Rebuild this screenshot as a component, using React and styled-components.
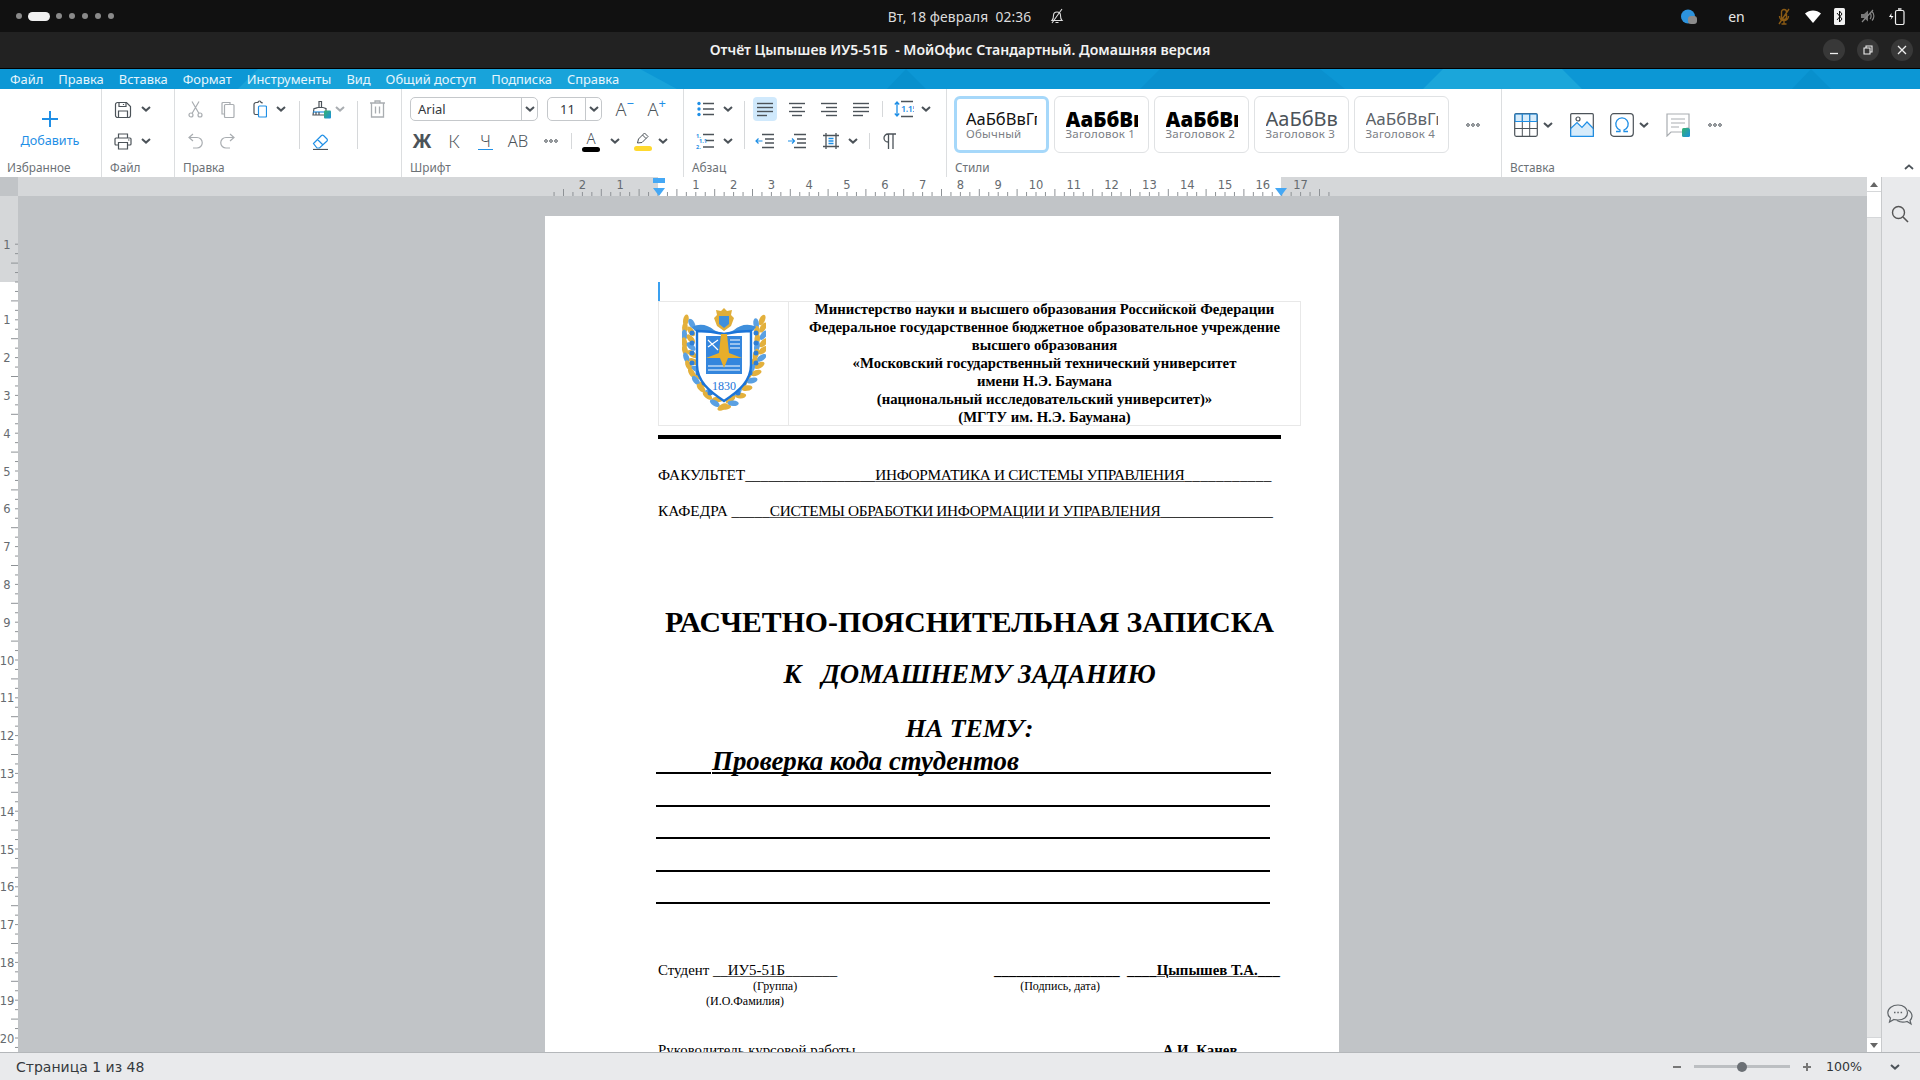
import React from 'react';
import styled, { createGlobalStyle } from 'styled-components';

const D = '#4c5359', G = '#a9adb1', B = '#1f8fe6';
const UI = '"Noto Sans", "Open Sans", sans-serif';
const SERIF = '"Liberation Serif", "Times New Roman", serif';

const Global = createGlobalStyle`
  html, body { margin: 0; padding: 0; background: #111; }
  * { box-sizing: border-box; }
`;
const App1 = styled.div`width:1920px;height:1080px;overflow:hidden;display:flex;flex-direction:column;font-family:${UI};`;

/* system bar */
const SysBar = styled.div`height:32px;flex:none;background:#111;display:grid;grid-template-columns:1fr auto 1fr;align-items:center;color:#dcdcdc;`;
const Workspaces = styled.div`display:flex;align-items:center;gap:7px;padding-left:16px;`;
const WsDot = styled.span`width:6px;height:6px;border-radius:50%;background:#8a8a8a;`;
const WsPill = styled.span`width:22px;height:9px;border-radius:5px;background:#f0f0f0;margin:0 -1px;`;
const Clock = styled.div`display:flex;align-items:center;gap:19px;font-size:13.8px;letter-spacing:.1px;white-space:pre;padding-left:32px;`;
const Tray = styled.div`display:flex;align-items:center;justify-content:flex-end;padding-right:11px;`;
const TrayItem = styled.span`display:flex;justify-content:center;align-items:center;width:${p=>p.$w}px;font-size:14px;color:#e6e6e6;`;

/* title bar */
const TitleBar = styled.div`height:37px;flex:none;background:#222;border-bottom:1px solid #000;display:flex;align-items:center;justify-content:center;position:relative;`;
const TitleText = styled.div`color:#f2f2f2;font-size:14.08px;font-weight:600;line-height:20px;margin-bottom:1px;white-space:pre;`;
const WinBtns = styled.div`position:absolute;right:7px;top:7px;display:flex;gap:12px;`;
const WinBtn = styled.div`width:22px;height:22px;border-radius:50%;background:#383838;display:flex;align-items:center;justify-content:center;`;

/* menu */
const MenuBar = styled.div`height:20px;flex:none;position:relative;background:#0c97d5;display:flex;align-items:center;gap:15px;padding:1px 0 0 10px;overflow:hidden;`;
const MenuBg = styled.svg`position:absolute;left:0;top:0;`;
const MenuItem = styled.span`position:relative;color:#e6f5fc;font-size:12.9px;line-height:19px;white-space:nowrap;`;

/* ribbon */
const Ribbon = styled.div`height:88px;flex:none;background:#fff;display:flex;`;
const Group = styled.div`width:${p=>p.$w}px;flex:${p=>p.$grow?'1':'none'};border-right:${p=>p.$grow?'0':'1px solid #dcdee0'};padding:8px 0 0 ${p=>p.$pl}px;display:flex;flex-direction:column;`;
const GroupBody = styled.div`height:56px;display:flex;align-items:${p=>p.$center?'center':'flex-start'};`;
const GroupLabel = styled.div`height:16px;margin-top:6px;margin-left:${p=>p.$ml||0}px;font-size:11.8px;line-height:16px;color:#6c7176;display:flex;justify-content:space-between;align-items:center;padding-right:6px;`;
const Stack = styled.div`display:flex;flex-direction:column;gap:8px;`;
const Row = styled.div`height:24px;display:flex;align-items:center;`;
const Slot = styled.span`flex:none;width:${p=>p.$w}px;margin-left:${p=>p.$ml||0}px;height:24px;display:flex;align-items:center;justify-content:center;border-radius:4px;background:${p=>p.$on?'#d0e9fc':'transparent'};align-self:center;`;
const ToolSep = styled.span`flex:none;width:1px;height:48px;margin:4px ${p=>p.$r}px 0 ${p=>p.$l}px;background:#d6d8da;`;
const RowSep = styled.span`flex:none;width:1px;height:16px;margin:0 ${p=>p.$r||0}px 0 ${p=>p.$l}px;background:#d6d8da;`;
const AddBtn = styled.div`width:84px;margin-left:8px;display:flex;flex-direction:column;align-items:center;color:${B};font-size:12.6px;line-height:16px;gap:5px;padding-top:13px;`;
const Select = styled.div`flex:none;width:${p=>p.$w}px;margin-left:${p=>p.$ml||0}px;height:24px;border:1px solid #c5c8cb;border-radius:5px;display:flex;align-items:center;font-size:13px;color:#33383c;`;
const SelectText = styled.span`flex:1;padding-left:${p=>p.$pl}px;`;
const SelectArrow = styled.span`flex:none;width:16px;height:22px;border-left:1px solid #c5c8cb;display:flex;align-items:center;justify-content:center;`;
const BigGlyph = styled.span`font-size:${p=>p.$s||17}px;font-weight:${p=>p.$wt||300};color:${D};line-height:18px;position:relative;font-family:${p=>p.$f||UI};`;
const Under = styled.span`font-size:16px;font-weight:300;color:${D};line-height:16px;border-bottom:1.5px solid ${B};padding:0 2px;`;
const Sup = styled.span`position:absolute;left:100%;top:-3px;color:${B};font-size:13px;font-weight:400;line-height:13px;`;
const ColorGlyph = styled.span`display:flex;flex-direction:column;align-items:center;font-size:15px;font-weight:300;line-height:15px;color:${D};`;
const ColorBar = styled.span`width:18px;height:5px;border-radius:3px;background:${p=>p.$c};margin-top:1px;`;
const StyleCard = styled.div`flex:none;width:95px;height:57px;margin:-1px 5px 0 0;border-radius:6px;border:${p=>p.$on?'3px solid #a6d8fa':'1.5px solid #e0e2e4'};padding:${p=>p.$on?'10px 9px 0 9px':'11.5px 10.5px 0 10.5px'};overflow:hidden;`;
const StylePreview = styled.div`height:18px;overflow:hidden;white-space:nowrap;font-size:${p=>p.$s}px;font-weight:${p=>p.$wt};line-height:20px;color:${p=>p.$c};`;
const StyleName = styled.div`font-size:11.5px;line-height:13px;color:#7b8085;white-space:nowrap;letter-spacing:.2px;`;

/* main */
const Main = styled.div`flex:1;min-height:0;display:flex;`;
const Workspace = styled.div`flex:1;min-width:0;display:flex;flex-direction:column;`;
const RulerBar = styled.div`height:19px;flex:none;display:flex;background:#d5d7d9;`;
const RulerCorner = styled.div`width:18px;flex:none;background:#c1c4c7;`;
const DocRow = styled.div`flex:1;min-height:0;display:flex;background:#c1c4c7;overflow:hidden;`;
const VRuler = styled.svg`flex:none;display:block;`;
const Canvas = styled.div`flex:1;min-width:0;display:flex;justify-content:center;padding:20px 1px 0 0;overflow:hidden;`;
const Page = styled.div`flex:none;width:794px;height:1200px;background:#fff;padding:66px 0 0 113px;font-family:${SERIF};color:#000;`;
const Caret = styled.div`width:2px;height:19px;background:#3aa0f0;margin-bottom:1px;`;
const HeadTable = styled.div`width:643px;height:125px;border:1px solid #e8e8e8;margin-top:-1px;display:grid;grid-template-columns:130px 1fr;`;
const LogoCell = styled.div`border-right:1px solid #e8e8e8;display:flex;justify-content:center;padding:5px 0 0 0;`;
const HeadText = styled.div`margin-top:-2px;text-align:center;font-size:14.72px;font-weight:700;line-height:18px;white-space:nowrap;`;
const ThickRule = styled.div`width:623px;height:4px;background:#000;margin-top:9px;`;
const DocLine = styled.div`height:20px;margin-top:${p=>p.$mt}px;font-size:15.3px;line-height:20px;white-space:pre;`;
const Title = styled.div`width:623px;text-align:center;white-space:pre;font-weight:700;font-style:${p=>p.$it?'italic':'normal'};font-size:${p=>p.$s}px;line-height:${p=>p.$lh}px;margin-top:${p=>p.$mt}px;`;
const TopicRow = styled.div`display:flex;align-items:flex-end;margin-left:-2px;height:30px;`;
const Fill = styled.span`flex:none;width:${p=>p.$w}px;height:2px;background:#000;margin-bottom:3px;`;
const Topic = styled.span`font-size:26.85px;font-weight:700;font-style:italic;line-height:37px;border-bottom:2px solid #000;height:31px;margin-bottom:3px;white-space:nowrap;margin-left:1px;`;
const BlankRule = styled.div`width:614px;height:2px;background:#000;margin:${p=>p.$mt}px 0 0 -2px;`;
const SigRow = styled.div`display:flex;margin-top:56px;height:20px;font-size:14.9px;line-height:20px;white-space:pre;`;
const SigLeft = styled.div`width:336px;flex:none;`;
const SubRow = styled.div`display:flex;height:15px;font-size:12px;line-height:15px;white-space:pre;margin-top:${p=>p.$mt||0}px;padding-left:${p=>p.$pl}px;`;
const SubGap = styled.span`flex:none;width:${p=>p.$w}px;`;
const LeaderRow = styled.div`display:flex;margin-top:31px;height:20px;font-size:14.9px;line-height:20px;white-space:pre;`;
const LeaderName = styled.span`margin-left:${p=>p.$ml}px;font-weight:700;`;
const U = styled.span`text-decoration:underline;text-decoration-color:${p=>p.$c||'#555'};letter-spacing:${p=>p.$ls||0}px;`;
const Tail = styled.span`letter-spacing:${p=>p.$ls}px;`;
const Bold = styled.b`font-weight:700;letter-spacing:-.05px;`;

const Scrollbar = styled.div`width:14px;flex:none;background:#e4e5e6;display:flex;flex-direction:column;`;
const ScrollBtn = styled.div`height:15px;flex:none;background:#fff;display:flex;align-items:center;justify-content:center;border-${p=>p.$up?'bottom':'top'}:1px solid #d5d7d9;`;
const ScrollArrow = styled.span`width:0;height:0;border-left:4px solid transparent;border-right:4px solid transparent;${p=>p.$up?'border-bottom':'border-top'}:5px solid #666;`;
const ScrollThumb = styled.div`height:26px;flex:none;background:#fff;border-bottom:1px solid #d5d7d9;`;
const ScrollSpace = styled.div`flex:1;`;
const Side = styled.div`width:39px;flex:none;background:#e9eaec;border-left:1px solid #c8cacc;display:flex;flex-direction:column;justify-content:space-between;align-items:center;padding:28px 2px 24px 0;`;

const Status = styled.div`height:28px;flex:none;background:#e9eaec;border-top:1px solid #b4b7ba;display:flex;align-items:center;justify-content:space-between;padding:0 20px 0 16px;font-size:14px;color:#35393d;font-family:"DejaVu Sans",sans-serif;`;
const StatusRight = styled.div`display:flex;align-items:center;`;
const SliderTrack = styled.div`width:96px;height:3px;background:#bcbfc2;margin:0 12px 0 12px;display:flex;align-items:center;padding-left:43px;`;
const SliderKnob = styled.span`width:10px;height:10px;border-radius:50%;background:#6b7075;`;
const Zoom = styled.span`font-size:12.6px;width:64px;margin-left:14px;color:#2f3336;`;

/* icons */
const Svg = ({w=16,h=16,vb,children,...r})=>(<svg width={w} height={h} viewBox={vb||`0 0 ${w} ${h}`} fill="none" strokeWidth="1.2" stroke={D} style={{flex:'none',display:'block'}} {...r}>{children}</svg>);
const Chev = ({c=D})=><Svg w={10} h={6}><path d="M1 1l4 3.600L9 1" stroke={c} strokeWidth="2"/></Svg>;
const Dots = ()=><Svg w={14} h={4}><circle cx="2" cy="2" r="1.300" strokeWidth="1"/><circle cx="7" cy="2" r="1.300" strokeWidth="1"/><circle cx="12" cy="2" r="1.300" strokeWidth="1"/></Svg>;
const SaveI = ()=><Svg w={18} h={17}><path d="M1.500 3.500a2 2 0 0 1 2-2h9l4 4v9a2 2 0 0 1-2 2h-11a2 2 0 0 1-2-2z"/><path d="M5 1.500v4h7v-4M4.500 16v-6h9v6M9.500 3v1"/></Svg>;
const PrintI = ()=><Svg w={18} h={17}><path d="M4.500 5V1h9v4M4.500 12H2a1 1 0 0 1-1-1V6a1 1 0 0 1 1-1h14a1 1 0 0 1 1 1v5a1 1 0 0 1-1 1h-2.500M4.500 9.500h9V16h-9zM14 7h1.500"/></Svg>;
const CutI = ()=><Svg w={15} h={17}><g stroke={G}><circle cx="3" cy="14" r="2"/><circle cx="12" cy="14" r="2"/><path d="M4 12.500L11 .5M11 12.500L4 .5"/></g></Svg>;
const CopyI = ()=><Svg w={14} h={17}><g stroke={G}><path d="M9 3V1.500H2A1 1 0 0 0 1 2.500V13h2.500"/><rect x="3.500" y="3.500" width="9.500" height="13" rx="1"/></g></Svg>;
const PasteI = ()=><Svg w={14} h={18}><path d="M9 3.500V2.500H8a1.500 1.500 0 0 0-3 0H3a2 2 0 0 0-2 2V13a1.500 1.500 0 0 0 1.500 1.500H5"/><rect x="5.500" y="6" width="8" height="11" rx="1" stroke={B}/></Svg>;
const BrushI = ()=><Svg w={20} h={19}><path d="M8 1.500h2.500v6H8zM3 8.500c2 0 3-1 4-1h5c1 0 2 1 3 1v6.500H2z" /><path d="M2 12h13" stroke={B}/><path d="M5 15v-3M8 15v-3" /><rect x="13" y="10.500" width="7" height="8" rx="1" fill="url(#gBrush)" stroke="none"/><defs><linearGradient id="gBrush" x1="0" y1="0" x2="1" y2="1"><stop offset="0" stopColor="#36b36a"/><stop offset="1" stopColor="#1a8fe0"/></linearGradient></defs></Svg>;
const TrashI = ()=><Svg w={15} h={18}><g stroke={G}><path d="M0 3h15M5 3V1h5v2M1.500 3v14h12V3M5.500 6.500v7M9.500 6.500v7" strokeWidth="1.300"/></g></Svg>;
const UndoI = ()=><Svg w={15} h={16}><path d="M5 1L1 4.500 5 8M1.500 4.500H9a5 5 0 0 1 0 10.500H5" stroke={G}/></Svg>;
const RedoI = ()=><Svg w={15} h={16}><path d="M10 1l4 3.500L10 8M13.500 4.500H6a5 5 0 0 0 0 10.500h4" stroke={G}/></Svg>;
const EraserI = ()=><Svg w={17} h={17}><path d="M1.500 10.500L9.500 2.500a1.500 1.500 0 0 1 2 0l3.500 3.500a1.500 1.500 0 0 1 0 2L7.500 15H5zM5.500 6.500L11 12" stroke={B}/><path d="M1 16.500h15"/></Svg>;
const Lines = ({rows})=><Svg w={17} h={16}>{rows.map(([a,b,y],i)=><path key={i} d={`M${a} ${y}H${b}`} strokeWidth="1.400"/>)}</Svg>;
const BulletI = ()=><Svg w={17} h={16}><g fill={B} stroke="none"><circle cx="2" cy="2.500" r="1.700"/><circle cx="2" cy="8" r="1.700"/><circle cx="2" cy="13.500" r="1.700"/></g><path d="M6 2.500h11M6 8h11M6 13.500h11" strokeWidth="1.300"/></Svg>;
const NumI = ()=><Svg w={19} h={16}><path d="M7 1.500h11M10 7.500h8M7 14h11" strokeWidth="1.300"/><text x="0" y="5" fontSize="5.500" fontWeight="700" fill={B} stroke="none">1.</text><text x="3" y="10" fontSize="5.500" fontWeight="700" fill={B} stroke="none">1.1</text><text x="0" y="15.500" fontSize="5.500" fontWeight="700" fill={B} stroke="none">2.</text></Svg>;
const SpacingI = ()=><Svg w={20} h={18}><path d="M3 2v14M.8 4.500L3 2l2.200 2.500M.8 13.500L3 16l2.200-2.500" stroke={B} strokeWidth="1.300"/><path d="M7 1.500h12M7 16.500h12" strokeWidth="1.300"/><text x="7" y="12" fontSize="9" fontWeight="600" fill={B} stroke="none" letterSpacing="-.4">1.15</text></Svg>;
const OutI = ()=><Svg w={19} h={16}><path d="M7 1.500h12M10 6h9M10 10h9M7 14.500h12" strokeWidth="1.300"/><path d="M7.500 8H1M3.500 5.500L1 8l2.500 2.500" stroke={B}/></Svg>;
const InI = ()=><Svg w={19} h={16}><path d="M7 1.500h12M10 6h9M10 10h9M7 14.500h12" strokeWidth="1.300"/><path d="M1 8h6.500M5 5.500L7.500 8 5 10.500" stroke={B}/></Svg>;
const MarginI = ()=><Svg w={16} h={16}><path d="M0 2.500h16M0 13.500h16M3 0v16M13 0v16" strokeWidth="1.300"/><path d="M5.500 5.500h5M5.500 8h5M5.500 10.500h5" stroke={B} strokeWidth="1.400"/></Svg>;
const ParaI = ()=><Svg w={14} h={16}><path d="M5.500 1v15M10 1v15M13 1H5a4 4 0 0 0 0 8h1" strokeWidth="1.300"/></Svg>;
const TableI = ()=><Svg w={24} h={24}><rect x="1" y="1" width="22" height="8" fill="#d7ecfb" stroke="none"/><path d="M8.300 1v22M15.700 1v22M1 8.500h22M1 15.500h22" strokeWidth="1"/><rect x=".7" y=".7" width="22.600" height="22.600" rx="1.500"/><path d="M1 1h22v7.500H1zM8.300 1v7.500M15.700 1v7.500" stroke={B} strokeWidth="1"/></Svg>;
const ImageI = ()=><Svg w={24} h={24}><rect x=".7" y=".7" width="22.600" height="22.600" rx="1" /><path d="M1 23V16l6-6 5 5 5-5 6 6v7z" fill="#d7ecfb" stroke="none"/><path d="M.7 15.500l6.300-6 5 5 5-5.500 6.300 6.500M.7 15.500V23.300h22.600V16" stroke={B}/><circle cx="8" cy="6" r="2"/></Svg>;
const OmegaI = ()=><Svg w={24} h={24}><rect x=".7" y=".7" width="22.600" height="22.600" rx="3"/><path d="M6 18.500h4v-1.500a6.200 6.200 0 1 1 4 0v1.500h4" stroke={B} strokeWidth="1.300"/></Svg>;
const NoteI = ()=><Svg w={24} h={24}><path d="M1 1h22v14h-2v4H5l-4 4z" stroke={G}/><path d="M5 6h14M5 10h14M5 14h8" stroke={G}/><rect x="16" y="15" width="8" height="9" rx="1.500" fill="url(#gNote)" stroke="none"/><defs><linearGradient id="gNote" x1="0" y1="0" x2="1" y2="1"><stop offset="0" stopColor="#36b36a"/><stop offset="1" stopColor="#1a8fe0"/></linearGradient></defs></Svg>;
const SearchI = ()=><Svg w={18} h={18}><circle cx="7.500" cy="7.500" r="6" stroke="#555" strokeWidth="1.400"/><path d="M12 12l5 5" stroke="#555" strokeWidth="1.600"/></Svg>;
const ChatI = ()=><Svg w={26} h={24}><path d="M11 1c5.500 0 9.500 3.300 9.500 7.700S16.500 16 11 16c-1.500 0-2.500-.2-4-.5L2.500 18l1-4C1.800 12.800.8 10.800.8 8.700.8 4.300 5.500 1 11 1z" stroke="#5f6468"/><path d="M21 6c2.500 1.500 4 3.500 4 6 0 2-1 3.500-2 4.500l1 3.500-4-2.500c-3 1-7 .8-10-1" stroke="#5f6468"/><path d="M7 8.500h1.500M10.300 8.500h1.500M13.600 8.500h1.500" stroke="#5f6468" strokeWidth="1.500"/></Svg>;

const wreath = (side) => Array.from({length:24}).map((_,i)=>{
  const t = i/23;
  const x = 42 + side*(31 + 9*Math.sin(Math.PI*(0.15+t*0.5)) - Math.pow(t,2.5)*37 + (i%2?-3.500:3));
  const y = 13 + t*87;
  return <ellipse key={i} cx={x} cy={y} rx="2.800" ry="5.600" fill={i%3===1?'#5aa0e2':'#e3b03c'} transform={`rotate(${side*(8+t*70)+(i%2?-18:18)} ${x} ${y})`}/>;
});
const Crest = ()=>(
  <svg width="84" height="104" viewBox="0 0 84 104" style={{display:'block',flex:'none'}}>
    {wreath(-1)}{wreath(1)}
    {[-1,1].map(s=>[0,1,2,3,4,5,6].map(i=><circle key={s*10+i} cx={42+s*(32-(i>3?(i-3)*6:0))} cy={26+i*10} r="2.500" fill="#2f7fd6"/>))}
    <path d="M10 20c8-4 16-2 22 3 3 2 7 3 10 3s7-1 10-3c6-5 14-7 22-3l-3 4c-6-1-10 1-14 5H27c-4-4-8-6-14-5z" fill="#3f8fdc"/>
    <path d="M15 24c10 0 18 1 27 3 9-2 17-3 27-3v34c0 16-12 26-27 36C27 84 15 74 15 58z" fill="#fff" stroke="#1b74d8" strokeWidth="2.400"/>
    <rect x="24" y="29" width="36" height="38" fill="#3486dd"/>
    <g stroke="#fff" strokeWidth="1.200"><path d="M26 33l10 10M26 40l10-7M48 33h10M48 37h10M48 41h10M26 59h32M26 63h32"/></g>
    <path d="M39 27h6l2 19 13 5H46l-4 10-4-10H24l13-5z" fill="#e7ae2a"/>
    <text x="42" y="83" fontSize="12" fontFamily="Liberation Serif" textAnchor="middle" fill="#1b74d8">1830</text>
    <path d="M42 1l3 3 5-1-1 5 3 3-3 8-7 5-7-5-3-8 3-3-1-5 5 1z" fill="#e0ae3a"/>
    <path d="M37 9h10v8l-5 4-5-4z" fill="#3f8fdc"/>
  </svg>
);

const cm = 37.8;
const HRuler = () => {
  const o = 640, ticks = [], labels = [];
  for (let i = -11; i <= 71; i++) {
    const x = o + i * cm / 4;
    if (x > 1312) break;
    const long = ((i % 4) + 4) % 4 === 2;
    ticks.push(<path key={i} d={`M${x} ${long?12:15}V19`} stroke="#8e9296" strokeWidth="1"/>);
    if (i % 4 === 0 && i !== 0) labels.push(<text key={i} x={x} y="12" fontSize="11.500" textAnchor="middle" fill="#666b70" fontFamily="DejaVu Sans">{Math.abs(i/4)}</text>);
  }
  return (
    <svg width="1849" height="19" viewBox="0 0 1849 19" style={{display:'block',flex:'none'}}>
      <rect x={o} y="0" width="623" height="19" fill="#fff"/>
      {ticks}{labels}
      <rect x={o-5} y="1" width="12" height="5" fill="#45a8f5"/>
      <path d={`M${o-5} 11h12l-6 8z`} fill="#45a8f5"/>
      <path d={`M${o+617} 11h12l-6 8z`} fill="#45a8f5"/>
    </svg>
  );
};
const VRulerDraw = () => {
  const o = 86, ticks = [], labels = [];
  for (let i = -4; i <= 82; i++) {
    const y = o + i * cm / 4;
    if (y > 856) break;
    const long = ((i % 4) + 4) % 4 === 2;
    ticks.push(<path key={i} d={`M${long?11:15} ${y}H18`} stroke="#8e9296" strokeWidth="1"/>);
    if (i % 4 === 0 && i !== 0) labels.push(<text key={i} x="7" y={y+4.500} fontSize="11.500" textAnchor="middle" fill="#666b70" fontFamily="DejaVu Sans">{Math.abs(i/4)}</text>);
  }
  return (
    <VRuler width="18" height="856" viewBox="0 0 18 856">
      <rect width="18" height="86" fill="#d5d7d9"/>
      <rect y="86" width="18" height="770" fill="#fff"/>
      {ticks}{labels}
    </VRuler>
  );
};

const menu = ['Файл','Правка','Вставка','Формат','Инструменты','Вид','Общий доступ','Подписка','Справка'];
const styles = [
  {p:'АаБбВвГг',n:'Обычный',s:16.5,w:400,c:'#111',on:true},
  {p:'АаБбВв',n:'Заголовок 1',s:20.5,w:900,c:'#000'},
  {p:'АаБбВв',n:'Заголовок 2',s:20.5,w:900,c:'#000'},
  {p:'АаБбВвГг',n:'Заголовок 3',s:20,w:400,c:'#4c5359'},
  {p:'АаБбВвГг',n:'Заголовок 4',s:17,w:400,c:'#5c6268'},
];

export default function App() {
  return (
    <App1>
      <Global/>
      <SysBar>
        <Workspaces><WsDot/><WsPill/><WsDot/><WsDot/><WsDot/><WsDot/><WsDot/></Workspaces>
        <Clock>
          <span>Вт, 18 февраля  02:36</span>
          <Svg w={14} h={16} stroke="#ddd"><path d="M2 12.500c1.500-1.500 1.500-3 1.500-5a3.500 3.500 0 0 1 7 0c0 2 0 3.500 1.500 5zM5.500 14.500h3M12 1L2 15" stroke="#ddd" strokeWidth="1.100"/></Svg>
        </Clock>
        <Tray>
          <TrayItem $w={29}><Svg w={16} h={15}><circle cx="7" cy="7.500" r="7" fill="#2c93dd" stroke="none"/><rect x="7" y="7" width="9" height="8" rx="3" fill="#8b8b8b" stroke="none"/></Svg></TrayItem>
          <TrayItem $w={67}>en</TrayItem>
          <TrayItem $w={27}><Svg w={14} h={17}><path d="M7 1.500a2.500 2.500 0 0 1 2.500 2.500v5a2.500 2.500 0 0 1-5 0V4A2.500 2.500 0 0 1 7 1.500zM2.500 8c0 6 9 6 9 0M7 13v3M4.500 16h5M12 1L2 16" stroke="#8a5a14" strokeWidth="1.400"/></Svg></TrayItem>
          <TrayItem $w={31}><Svg w={16} h={13}><path d="M0 3.500C4.500-.5 11.500-.5 16 3.500L8 13z" fill="#fff" stroke="none"/></Svg></TrayItem>
          <TrayItem $w={23}><Svg w={11} h={17}><rect width="11" height="17" rx="1.500" fill="#f2f2f2" stroke="none"/><path d="M3 5l5 6-2.500 3V3L8 6l-5 6" stroke="#111" strokeWidth="1"/></Svg></TrayItem>
          <TrayItem $w={33}><Svg w={15} h={14}><path d="M1 5h3l4-3.500v11L4 9H1z" fill="#777" stroke="none"/><path d="M10 4c1.500 1.500 1.500 4.500 0 6M12 2.500c2.500 2.500 2.500 6.500 0 9M2 13L13 1" stroke="#888"/></Svg></TrayItem>
          <TrayItem $w={25}><Svg w={17} h={17}><path d="M3.500 5L1 9h2.500L2.500 12 5.500 8H3.300z" fill="#fff" stroke="none"/><rect x="7.500" y="2.500" width="8.500" height="14" rx="1.500" stroke="#f0f0f0"/><path d="M10 1h3.500" stroke="#f0f0f0" strokeWidth="1.500"/></Svg></TrayItem>
        </Tray>
      </SysBar>

      <TitleBar>
        <TitleText>Отчёт Цыпышев ИУ5-51Б  - МойОфис Стандартный. Домашняя версия</TitleText>
        <WinBtns>
          <WinBtn><Svg w={10} h={10}><path d="M1 8.500h8" stroke="#eee" strokeWidth="1.300"/></Svg></WinBtn>
          <WinBtn><Svg w={10} h={10}><path d="M3 3V1h6v6H7M1 3h6v6H1z" stroke="#eee" strokeWidth="1.100"/></Svg></WinBtn>
          <WinBtn><Svg w={10} h={10}><path d="M1 1l8 8M9 1L1 9" stroke="#eee" strokeWidth="1.300"/></Svg></WinBtn>
        </WinBtns>
      </TitleBar>

      <MenuBar>
        <MenuBg width="1920" height="20" viewBox="0 0 1920 20">
          <path d="M238 20L258 0H640L677 20z" fill="#18a3da"/>
          <path d="M887 20L906 0 926 20z" fill="#0890cd"/>
          <path d="M1140 20L1160 0H1320L1345 20z" fill="#0a90ce"/>
          <path d="M1423 20L1443 0H1562L1582 20z" fill="#1ba6da"/>
          <path d="M1792 20L1811 0 1831 20z" fill="#0890cd"/>
        </MenuBg>
        {menu.map(m=><MenuItem key={m}>{m}</MenuItem>)}
      </MenuBar>

      <Ribbon>
        <Group $w={102} $pl={0}>
          <GroupBody>
            <AddBtn>
              <Svg w={18} h={18}><path d="M9 1v16M1 9h16" stroke={B} strokeWidth="2"/></Svg>
              <span>Добавить</span>
            </AddBtn>
          </GroupBody>
          <GroupLabel $ml={7}>Избранное</GroupLabel>
        </Group>

        <Group $w={73} $pl={12}>
          <GroupBody>
            <Stack>
              <Row><Slot $w={18}><SaveI/></Slot><Slot $w={28}><Chev/></Slot></Row>
              <Row><Slot $w={18}><PrintI/></Slot><Slot $w={28}><Chev/></Slot></Row>
            </Stack>
          </GroupBody>
          <GroupLabel $ml={-4}>Файл</GroupLabel>
        </Group>

        <Group $w={227} $pl={8}>
          <GroupBody>
            <Stack>
              <Row><Slot $w={24}><CutI/></Slot><Slot $w={41}><CopyI/></Slot><Slot $w={23}><PasteI/></Slot><Slot $w={20}><Chev/></Slot></Row>
              <Row><Slot $w={24}><UndoI/></Slot><Slot $w={41}><RedoI/></Slot></Row>
            </Stack>
            <ToolSep $l={8} $r={7}/>
            <Stack>
              <Row><Slot $w={28}><BrushI/></Slot><Slot $w={9}><Chev c={G}/></Slot></Row>
              <Row><Slot $w={27}><EraserI/></Slot></Row>
            </Stack>
            <ToolSep $l={13} $r={7}/>
            <Stack><Row><Slot $w={24}><TrashI/></Slot></Row></Stack>
          </GroupBody>
          <GroupLabel>Правка</GroupLabel>
        </Group>

        <Group $w={282} $pl={8}>
          <GroupBody>
            <Stack>
              <Row>
                <Select $w={128}><SelectText $pl={7}>Arial</SelectText><SelectArrow><Chev/></SelectArrow></Select>
                <Select $w={55} $ml={9}><SelectText $pl={12}>11</SelectText><SelectArrow><Chev/></SelectArrow></Select>
                <Slot $w={38}><BigGlyph $s={18}>А<Sup>−</Sup></BigGlyph></Slot>
                <Slot $w={26}><BigGlyph $s={18}>А<Sup>+</Sup></BigGlyph></Slot>
              </Row>
              <Row>
                <Slot $w={24}><BigGlyph $s={19} $wt={700}>Ж</BigGlyph></Slot>
                <Slot $w={40}><BigGlyph $s={18} $wt={300} $f="Lato">К</BigGlyph></Slot>
                <Slot $w={23}><Under>Ч</Under></Slot>
                <Slot $w={42}><BigGlyph $s={16.500}>АВ</BigGlyph></Slot>
                <Slot $w={23}><Dots/></Slot>
                <RowSep $l={9}/>
                <Slot $w={38}><ColorGlyph>А<ColorBar $c="#000"/></ColorGlyph></Slot>
                <Slot $w={10}><Chev/></Slot>
                <Slot $w={30} $ml={8}><ColorGlyph><Svg w={14} h={14}><path d="M1.500 12l1-4L8.500 2l3.500 3.500-6 6zM6.500 4l3.500 3.500" strokeWidth="1"/></Svg><ColorBar $c="#ffd92e"/></ColorGlyph></Slot>
                <Slot $w={10}><Chev/></Slot>
              </Row>
            </Stack>
          </GroupBody>
          <GroupLabel>Шрифт</GroupLabel>
        </Group>

        <Group $w={263} $pl={8}>
          <GroupBody>
            <Stack>
              <Row><Slot $w={27}><BulletI/></Slot><Slot $w={18}><Chev/></Slot></Row>
              <Row><Slot $w={27}><NumI/></Slot><Slot $w={18}><Chev/></Slot></Row>
            </Stack>
            <ToolSep $l={7} $r={8}/>
            <Stack>
              <Row>
                <Slot $w={24} $on><Lines rows={[[0,16,2.5],[0,16,6.5],[0,16,10.5],[0,10,14.5]]}/></Slot>
                <Slot $w={40}><Lines rows={[[0,16,2.5],[3,13,6.5],[0,16,10.5],[3,13,14.5]]}/></Slot>
                <Slot $w={24}><Lines rows={[[0,16,2.5],[5,16,6.5],[0,16,10.5],[5,16,14.5]]}/></Slot>
                <Slot $w={40}><Lines rows={[[0,16,2.5],[0,16,6.5],[0,16,10.5],[0,10,14.5]]}/></Slot>
                <RowSep $l={1}/>
                <Slot $w={37} $ml={2}><SpacingI/></Slot>
                <Slot $w={8}><Chev/></Slot>
              </Row>
              <Row>
                <Slot $w={23}><OutI/></Slot>
                <Slot $w={41}><InI/></Slot>
                <Slot $w={28}><MarginI/></Slot>
                <Slot $w={16}><Chev/></Slot>
                <RowSep $l={8}/>
                <Slot $w={39}><ParaI/></Slot>
              </Row>
            </Stack>
          </GroupBody>
          <GroupLabel>Абзац</GroupLabel>
        </Group>

        <Group $w={555} $pl={7}>
          <GroupBody>
            {styles.map(s=>(
              <StyleCard key={s.n} $on={s.on}>
                <StylePreview $s={s.s} $wt={s.w} $c={s.c}>{s.p}</StylePreview>
                <StyleName>{s.n}</StyleName>
              </StyleCard>
            ))}
            <Slot $w={24} $ml={7}><Dots/></Slot>
          </GroupBody>
          <GroupLabel $ml={1}>Стили</GroupLabel>
        </Group>

        <Group $grow $pl={8}>
          <GroupBody $center>
            <Slot $w={32}><TableI/></Slot><Slot $w={12}><Chev/></Slot>
            <Slot $w={56}><ImageI/></Slot>
            <Slot $w={24}><OmegaI/></Slot><Slot $w={20}><Chev/></Slot>
            <Slot $w={48}><NoteI/></Slot>
            <Slot $w={25}><Dots/></Slot>
          </GroupBody>
          <GroupLabel><span>Вставка</span><Svg w={10} h={6}><path d="M1 5l4-3.600L9 5" strokeWidth="1.800"/></Svg></GroupLabel>
        </Group>
      </Ribbon>

      <Main>
        <Workspace>
          <RulerBar><RulerCorner/><HRuler/></RulerBar>
          <DocRow>
            <VRulerDraw/>
            <Canvas>
              <Page>
                <Caret/>
                <HeadTable>
                  <LogoCell><Crest/></LogoCell>
                  <HeadText>
                    Министерство науки и высшего образования Российской Федерации<br/>
                    Федеральное государственное бюджетное образовательное учреждение<br/>
                    высшего образования<br/>
                    «Московский государственный технический университет<br/>
                    имени Н.Э. Баумана<br/>
                    (национальный исследовательский университет)»<br/>
                    (МГТУ им. Н.Э. Баумана)
                  </HeadText>
                </HeadTable>
                <ThickRule/>
                <DocLine $mt={26}>ФАКУЛЬТЕТ_________________<U $ls={-.33}>ИНФОРМАТИКА И СИСТЕМЫ УПРАВЛЕНИЯ</U><Tail $ls={.3}>___________</Tail></DocLine>
                <DocLine $mt={16}>КАФЕДРА _____<U $ls={-.33}>СИСТЕМЫ ОБРАБОТКИ ИНФОРМАЦИИ И УПРАВЛЕНИЯ</U><Tail $ls={-.15}>_______________</Tail></DocLine>
                <Title $s={29.750} $lh={40} $mt={81}>РАСЧЕТНО-ПОЯСНИТЕЛЬНАЯ ЗАПИСКА</Title>
                <Title $it $s={26.700} $lh={40} $mt={12}>К   ДОМАШНЕМУ ЗАДАНИЮ</Title>
                <Title $it $s={26} $lh={36} $mt={17}>НА ТЕМУ:</Title>
                <TopicRow><Fill $w={55}/><Topic>Проверка кода студентов</Topic><Fill $w={252}/></TopicRow>
                <BlankRule $mt={28}/>
                <BlankRule $mt={30}/>
                <BlankRule $mt={31}/>
                <BlankRule $mt={30}/>
                <SigRow>
                  <SigLeft>Студент __<U>ИУ5-51Б</U>_______</SigLeft>
                  <span><Bold>_________________  ____<U>Цыпышев Т.А.</U>___</Bold></span>
                </SigRow>
                <SubRow $pl={95} $mt={-1}>(Группа)<SubGap $w={223}/>(Подпись, дата)</SubRow>
                <SubRow $pl={48}>(И.О.Фамилия)</SubRow>
                <LeaderRow>Руководитель курсовой работы<LeaderName $ml={307}>А.И. Канев</LeaderName></LeaderRow>
              </Page>
            </Canvas>
          </DocRow>
        </Workspace>
        <Scrollbar>
          <ScrollBtn $up><ScrollArrow $up/></ScrollBtn>
          <ScrollThumb/>
          <ScrollSpace/>
          <ScrollBtn><ScrollArrow/></ScrollBtn>
        </Scrollbar>
        <Side><SearchI/><ChatI/></Side>
      </Main>

      <Status>
        <span>Страница 1 из 48</span>
        <StatusRight>
          <Svg w={10} h={10}><path d="M1 5h8" stroke="#777" strokeWidth="2"/></Svg>
          <SliderTrack><SliderKnob/></SliderTrack>
          <Svg w={10} h={10}><path d="M1 5h8M5 1v8" stroke="#777" strokeWidth="2"/></Svg>
          <Zoom>100%</Zoom>
          <Chev/>
        </StatusRight>
      </Status>
    </App1>
  );
}
